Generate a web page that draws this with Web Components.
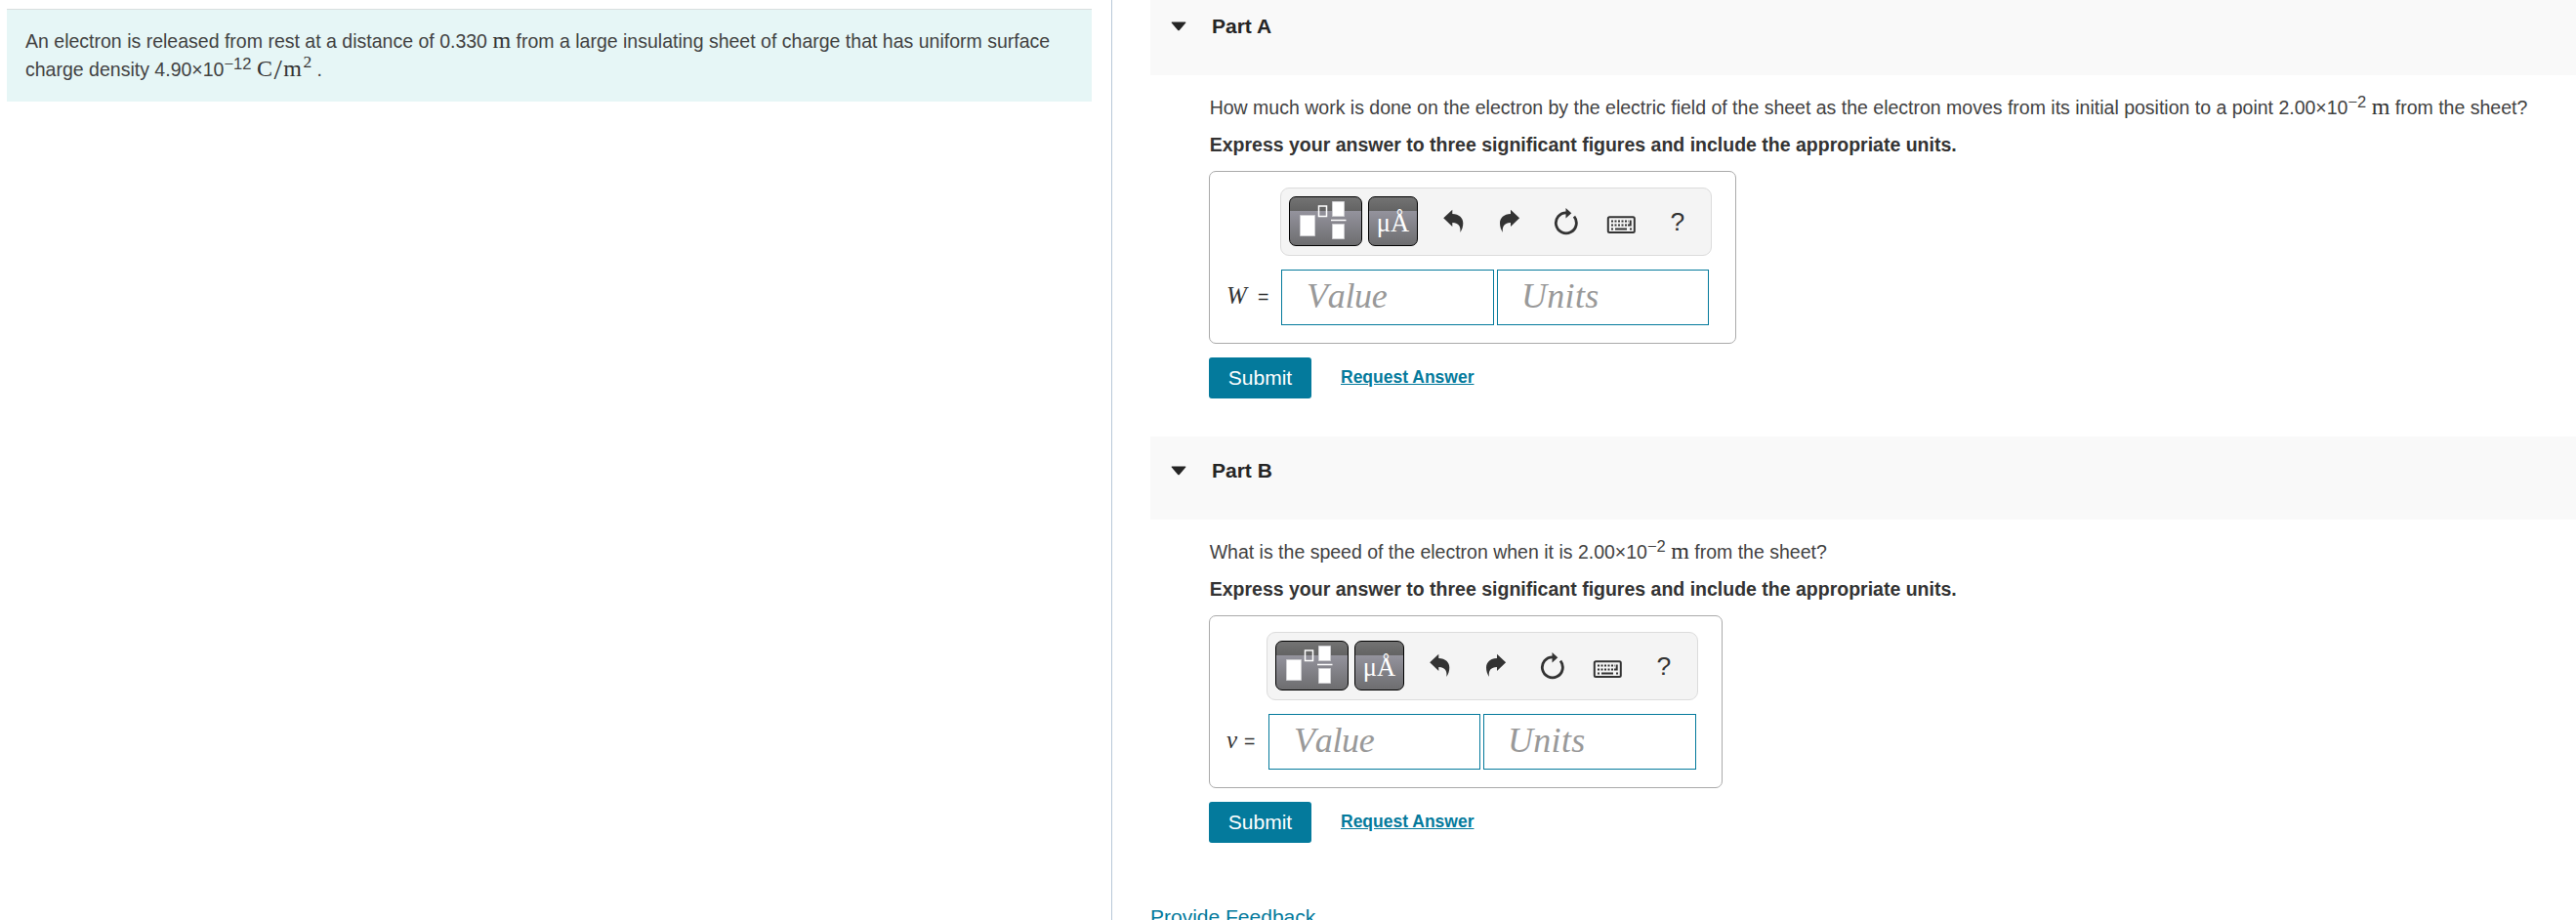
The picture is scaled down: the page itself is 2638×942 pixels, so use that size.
<!DOCTYPE html>
<html lang="en">
<head>
<meta charset="utf-8">
<title>Electric field of a sheet</title>
<style>
  html, body {
    margin: 0;
    height: 942px;
    overflow: hidden;
    background: #fff;
    font-family: "Liberation Sans", Arial, sans-serif;
    color: #424242;
  }
</style>
</head>
<body>
<problem-page>
  <problem-intro slot="intro">An electron is released from rest at a distance of 0.330 <math-unit>m</math-unit> from a large insulating sheet of charge that has uniform surface charge density 4.90×10<math-power>−12</math-power> <math-unit wide>C<span>/</span>m<math-power small>2</math-power></math-unit> .</problem-intro>
  <problem-part label="Part A" symbol="W">
    <span slot="question">How much work is done on the electron by the electric field of the sheet as the electron moves from its initial position to a point 2.00×10<math-power>−2</math-power> <math-unit>m</math-unit> from the sheet?</span>
    <span slot="hint">Express your answer to three significant figures and include the appropriate units.</span>
  </problem-part>
  <problem-part label="Part B" symbol="v">
    <span slot="question">What is the speed of the electron when it is 2.00×10<math-power>−2</math-power> <math-unit>m</math-unit> from the sheet?</span>
    <span slot="hint">Express your answer to three significant figures and include the appropriate units.</span>
  </problem-part>
  <a slot="feedback">Provide Feedback</a>
</problem-page>

<script>
class BaseComponent extends HTMLElement {
  constructor() {
    super();
    const template = document.createElement("template");
    template.innerHTML = this.constructor.markup;
    this.attachShadow({ mode: "open" });
    this.shadowRoot.appendChild(template.content.cloneNode(true));
  }
}

class ProblemPage extends BaseComponent {
  static markup = `
<style>
  :host {
    display: grid;
    grid-template-columns: 1138px 1fr;
    height: 942px;
    overflow: hidden;
  }
  .left {
    padding: 9px 20px 0 7px;
  }
  .right {
    border-left: 1px solid #b9c8d8;
    padding-left: 39px;
  }
  /* the pane is scrolled a little past the top of the first part */
  .scroll {
    margin-top: -8px;
  }
  .feedback {
    padding-top: 23px;
    font-size: 21px;
    line-height: 28px;
    color: #047a9c;
  }
</style>
<div class="left"><slot name="intro"></slot></div>
<div class="right">
  <div class="scroll">
    <slot></slot>
    <div class="feedback"><slot name="feedback"></slot></div>
  </div>
</div>`;
}

class ProblemIntro extends BaseComponent {
  static markup = `
<style>
  :host {
    display: block;
    box-sizing: border-box;
    height: 95px;
    padding: 18px 30px 0 19px;
    border-top: 1px solid #d9dfdf;
    background: #e6f6f6;
    font-size: 19.53px;
    line-height: 29px;
  }
</style>
<slot></slot>`;
}

// no whitespace before the slot here, it would show up as a space in the sentence
class MathUnit extends BaseComponent {
  static markup = `<style>
  :host {
    font-family: "Liberation Serif", "Times New Roman", serif;
    font-size: 24px;
    line-height: 0;
    color: #333;
  }
  :host([wide]) {
    letter-spacing: 1.5px;
  }
  ::slotted(span) {
    font-size: 30px;
    vertical-align: -3px;
  }
</style><slot></slot>`;
}

class MathPower extends BaseComponent {
  static markup = `<style>
  :host {
    font-size: 16.5px;
    letter-spacing: 0;
    line-height: 0;
    vertical-align: 7.5px;
  }
  :host([small]) {
    font-size: 17.5px;
    vertical-align: 9px;
  }
</style><slot></slot>`;
}

class ProblemPart extends BaseComponent {
  static markup = `
<style>
  :host {
    display: block;
    height: 455px;
  }
  header {
    display: flex;
    gap: 26px;
    box-sizing: border-box;
    height: 85px;
    padding: 22px 0 0 21px;
    background: #f9f9f9;
    font-size: 21px;
    font-weight: bold;
    line-height: 26px;
    color: #252525;
  }
  header svg {
    margin-top: 8px;
  }
  .body {
    padding-left: 60px;
  }
  .question, .hint {
    padding-left: 0.7px;
    font-size: 19.5px;
    line-height: 38px;
    white-space: nowrap;
  }
  .question {
    padding-top: 14px;
  }
  .hint {
    font-weight: bold;
    color: #333;
    margin-bottom: 8px;
  }
  .actions {
    display: flex;
    gap: 30px;
    padding-top: 14px;
  }
  .submit {
    width: 105px;
    height: 42px;
    border: 0;
    padding: 0;
    border-radius: 3px;
    background: #047a9c;
    color: #fff;
    font: 21px/42px "Liberation Sans", Arial, sans-serif;
  }
  .request {
    font-size: 17.5px;
    font-weight: bold;
    line-height: 40px;
    color: #047a9c;
    text-decoration: underline;
  }
</style>
<header>
  <svg width="16" height="10" viewBox="0 0 16 10"><path d="M1.200 .5h13.600q1 0 .4 1L9 8.800q-1 1-2 0L.8 1.500q-.6-1 .4-1z" fill="#252525"/></svg>
  <span class="label"></span>
</header>
<div class="body">
  <div class="question"><slot name="question"></slot></div>
  <div class="hint"><slot name="hint"></slot></div>
  <answer-box></answer-box>
  <div class="actions">
    <button class="submit">Submit</button>
    <a class="request">Request Answer</a>
  </div>
</div>`;

  connectedCallback() {
    this.shadowRoot.querySelector(".label").textContent = this.getAttribute("label");
    this.shadowRoot.querySelector("answer-box").setAttribute("symbol", this.getAttribute("symbol"));
  }
}

class AnswerBox extends BaseComponent {
  static observedAttributes = ["symbol"];
  static markup = `
<style>
  :host {
    display: grid;
    grid-template-columns: 72px 442px;
    box-sizing: border-box;
    width: 540px;
    height: 177px;
    padding-top: 16px;
    border: 1px solid #aaa;
    border-radius: 7px;
    align-content: start;
  }
  :host([symbol="v"]) {
    grid-template-columns: 58px 442px;
    width: 526px;
  }
  math-toolbar {
    grid-column: 2;
  }
  .symbol {
    padding: 28px 0 0 17px;
    font-size: 19.5px;
    line-height: 28px;
    color: #333;
    white-space: nowrap;
  }
  i {
    display: inline-block;
    width: 32px;
    font-family: "Liberation Serif", "Times New Roman", serif;
    font-size: 25px;
    line-height: 0;
  }
  :host([symbol="v"]) i {
    width: 18px;
  }
  .fields {
    display: flex;
    gap: 3px;
    padding: 14px 0 0 1px;
  }
  :host([symbol="v"]) .fields {
    padding-left: 2px;
  }
  .field {
    box-sizing: border-box;
    width: 218px;
    height: 57px;
    border: 1px solid #047a9c;
    padding-left: 25px;
    font: italic 36px/53px "Liberation Serif", "Times New Roman", serif;
    font-kerning: none;
    letter-spacing: -0.3px;
    color: #999;
  }
  .field + .field {
    width: 217px;
    padding-left: 24px;
    letter-spacing: 0.3px;
  }
  :host([symbol="v"]) .field {
    width: 217px;
  }
  :host([symbol="v"]) .field + .field {
    width: 218px;
  }
</style>
<math-toolbar></math-toolbar>
<div class="symbol"><i></i>=</div>
<div class="fields">
  <div class="field">Value</div>
  <div class="field">Units</div>
</div>`;

  attributeChangedCallback(name, old, value) {
    this.shadowRoot.querySelector("i").textContent = value;
  }
}

class MathToolbar extends BaseComponent {
  static markup = `
<style>
  :host {
    display: flex;
    box-sizing: border-box;
    height: 70px;
    padding: 8px 0 0 8px;
    border: 1px solid #dcdcdc;
    border-radius: 9px;
    background: #f4f4f4;
    color: #333;
  }
  .dark {
    box-sizing: border-box;
    width: 75px;
    height: 51px;
    margin-right: 6px;
    border: 1px solid #000;
    border-radius: 7px;
    background: linear-gradient(#737373 0, #636363 14px, #94939d 14px, #6d6d6f 100%);
  }
  .unit {
    width: 51px;
    margin-right: 7px;
    font: 26.5px/52px "Liberation Serif", "Times New Roman", serif;
    text-align: center;
    color: #fff;
  }
  .icon {
    display: flex;
    justify-content: center;
    width: 57.5px;
    height: 51px;
  }
  .help {
    font-size: 26.5px;
    line-height: 52px;
  }
</style>
<div class="dark">
  <svg width="73" height="49" viewBox="0 0 73 49">
    <g fill="#fff" stroke="#cfcfd2">
      <path d="M10.500 18.500h15v21h-15zM43.500 4.500h12v15h-12zM43.500 27.500h12v15h-12z"/>
    </g>
    <path d="M42 23.500h15.500" stroke="#fff" stroke-width="1.500"/>
    <path d="M29.500 9h8v10.500h-8z" fill="none" stroke="#fff" stroke-width="1.500"/>
  </svg>
</div>
<div class="dark unit">μÅ</div>
<div class="icon"><svg width="22" height="51" viewBox="0 0 22 51"><path d="M1.200 22.300L10.300 13.700V18c7 .2 11 4 11 9.500 0 3.500-1 6.500-3 9.500 .8-5-.5-9.800-8-10v4z" fill="#333"/></svg></div>
<div class="icon"><svg width="22" height="51" viewBox="-1.300 0 22 51" overflow="visible"><path d="M20.800 22.300L11.700 13.700V18c-7 .2-11 4-11 9.500 0 3.500 1 6.500 3 9.500 -.8-5 .5-9.800 8-10v4z" fill="#333"/></svg></div>
<div class="icon"><svg width="26" height="51" viewBox="0 0 26 51"><path d="M14 16.800A10.500 10.500 0 1 0 22 20.700" fill="none" stroke="#333" stroke-width="2.800"/><path d="M13.500 12l5.800 5.200-5.800 5.200z" fill="#333"/></svg></div>
<div class="icon"><svg width="30" height="51" viewBox="0 0 30 51">
  <rect x="1.800" y="21.300" width="27" height="15.700" rx="1.500" fill="none" stroke="#333" stroke-width="2"/>
  <path d="M5 25.500h18M5 29.500h17M5 33.500h2" fill="none" stroke="#333" stroke-width="2" stroke-dasharray="2 1.500"/>
  <path d="M9 33.500h12M24 33.500h2M24.700 24.500v6M22 29.500h3.500" stroke="#333" stroke-width="2"/>
</svg></div>
<div class="icon help">?</div>`;
}

customElements.define("math-unit", MathUnit);
customElements.define("math-power", MathPower);
customElements.define("math-toolbar", MathToolbar);
customElements.define("answer-box", AnswerBox);
customElements.define("problem-intro", ProblemIntro);
customElements.define("problem-part", ProblemPart);
customElements.define("problem-page", ProblemPage);
</script>
</body>
</html>
